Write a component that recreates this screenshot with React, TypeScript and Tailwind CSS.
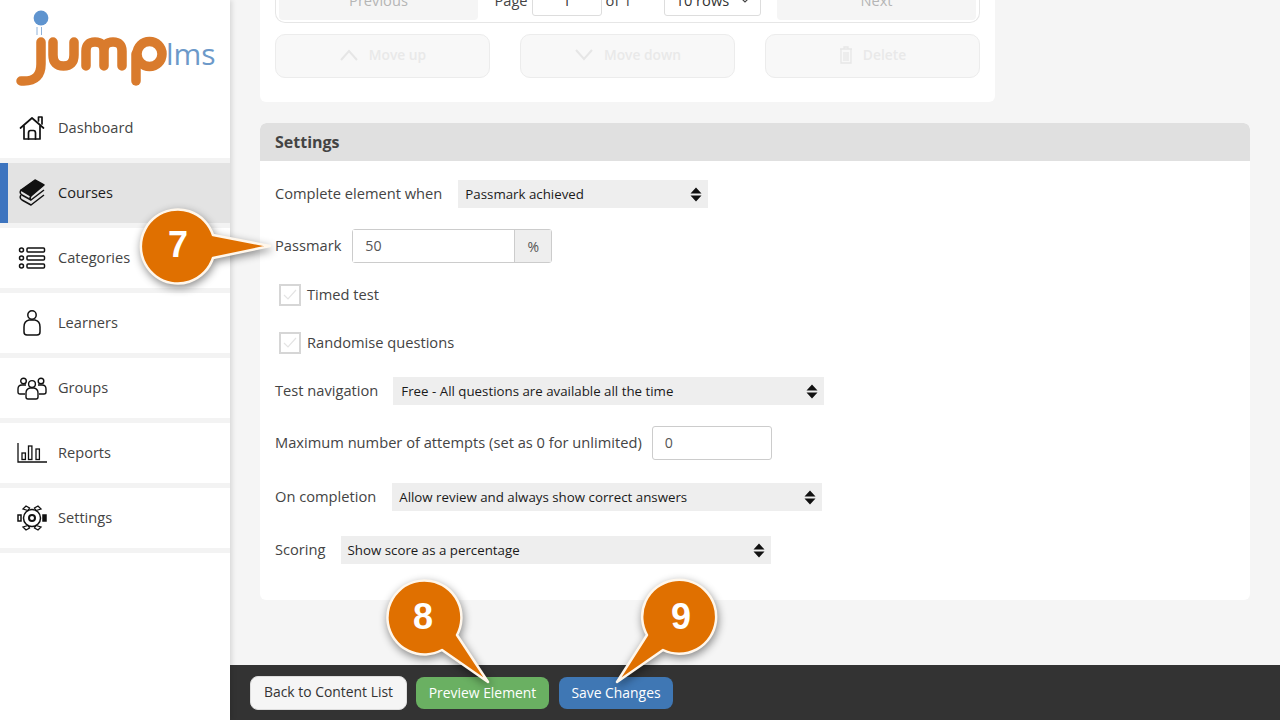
import React from "react";

const Home = () => (
  <svg width="26" height="24" viewBox="0 0 26 24" fill="none" stroke="#111" strokeWidth="1.7" strokeLinejoin="round" strokeLinecap="round">
    <path d="M1.5 12 13 2l11.5 10" />
    <path d="M5 10v13h16V10" />
    <path d="M9.5 23v-6q0-2.5 2-2.5h3q2 0 2 2.5v6" />
    <path d="M19.5 5V1h3.5v7" fill="#fff" />
  </svg>
);
const Books = () => (
  <svg width="28" height="28" viewBox="0 0 28 28" fill="none" stroke="#111" strokeWidth="1.5" strokeLinejoin="round">
    <path d="M3 11 17 1l9 5-13 11z" fill="#111" />
    <path d="M3 11q-2 3 1 5l9 5 13-10" />
    <path d="M3 16q-2 3 1 5l9 5 13-10" />
    <path d="M13 17q-2 2 0 4" />
  </svg>
);
const ListIcon = () => (
  <svg width="28" height="22" viewBox="0 0 28 22" fill="none" stroke="#111" strokeWidth="1.5">
    <circle cx="3.5" cy="3" r="2" />
    <circle cx="3.5" cy="11" r="2" />
    <circle cx="3.5" cy="19" r="2" />
    <rect x="9" y="1" width="17.5" height="4" rx="1" />
    <rect x="9" y="9" width="17.5" height="4" rx="1" />
    <rect x="9" y="17" width="17.5" height="4" rx="1" />
  </svg>
);
const Person = () => (
  <svg width="18" height="26" viewBox="0 0 18 26" fill="none" stroke="#111" strokeWidth="1.5">
    <circle cx="9" cy="5" r="4.2" />
    <path d="M4 25q-3 0-3-3v-5q0-6 5-7h6q5 1 5 7v5q0 3-3 3z" />
  </svg>
);
const Group = () => (
  <svg width="30" height="23" viewBox="0 0 30 23" fill="none" stroke="#111" strokeWidth="1.4" strokeLinejoin="round">
    <circle cx="6.5" cy="4" r="2.8" />
    <circle cx="24" cy="4" r="2.8" />
    <circle cx="15" cy="7" r="3.4" />
    <path d="M8 17H3q-2 0-2-2v-3q0-4 4-4h4" />
    <path d="M22 17h5q2 0 2-2v-3q0-4-4-4h-4" />
    <path d="M11 22q-2 0-2-2v-4q0-4 4-5h4q4 1 4 5v4q0 2-2 2z" />
  </svg>
);
const Chart = () => (
  <svg width="30" height="20" viewBox="0 0 30 20" fill="none" stroke="#111" strokeWidth="1.3">
    <path d="M1 0v19h29" />
    <rect x="5" y="10" width="3.4" height="6.5" />
    <rect x="11.5" y="3" width="3.4" height="13.5" />
    <rect x="19" y="6" width="3.4" height="10.5" />
  </svg>
);
const Gear = () => (
  <svg width="30" height="28" viewBox="0 0 30 28" fill="none" stroke="#111" strokeWidth="1.5">
    <circle cx="15" cy="14" r="8.5" />
    <circle cx="15" cy="14" r="3" strokeWidth="2" />
    <rect x="1" y="11" width="3" height="6" />
    <rect x="26" y="11" width="3" height="6" fill="#111" />
    <path d="m6 5 3-3 3.5 2-1.5 2.5zM24 5l-3-3-3.5 2 1.5 2.5zM6 23l3 3 3.5-2-1.5-2.5zM24 23l-3 3-3.5-2 1.5-2.5z" strokeWidth="1.3" />
  </svg>
);

const nav: { label: string; icon: React.ReactNode; active?: boolean }[] = [
  { label: "Dashboard", icon: <Home /> },
  { label: "Courses", icon: <Books />, active: true },
  { label: "Categories", icon: <ListIcon /> },
  { label: "Learners", icon: <Person /> },
  { label: "Groups", icon: <Group /> },
  { label: "Reports", icon: <Chart /> },
  { label: "Settings", icon: <Gear /> },
];

const Logo = () => (
  <div className="relative h-[98px] w-full shrink-0">
    <svg className="absolute left-0 top-0" width="170" height="90" viewBox="0 0 170 90" fill="none">
      <circle cx="41" cy="18" r="7.4" fill="#5f94cf" />
      <path d="M37 27v8M41.5 27v8" stroke="#8fb2da" strokeWidth="1" />
      <g stroke="#d97b2d" strokeWidth="9.5" strokeLinecap="round" strokeLinejoin="round">
        <path d="M41 42v22q0 17-17 17h-3" />
        <path d="M53 42v13q0 11 10.5 11T74 55V42" />
        <path d="M86 66V51q0-9 9-9t9 9v15M104 51q0-9 9-9t9 9v15" />
        <path d="M136 81V54" />
        <circle cx="149.5" cy="54" r="12.5" />
      </g>
    </svg>
    <span className="absolute left-[166px] top-[34px] text-[30px] leading-[40px] text-[#6c99c9]">lms</span>
  </div>
);

const Sidebar = () => (
  <aside className="relative z-10 flex h-full w-[230px] shrink-0 flex-col bg-white shadow-[2px_0_5px_rgba(0,0,0,0.12)]">
    <Logo />
    <div className="flex flex-col gap-[5px] bg-[#f3f3f3]">
      {nav.map((n) => (
        <div key={n.label} className={`flex h-[60px] items-center ${n.active ? "border-l-8 border-[#3d74bf] bg-[#e3e3e3] text-[#1c1c1c]" : "bg-white text-[#444]"}`}>
          <div className={`flex justify-center ${n.active ? "ml-[10px] w-[28px]" : "ml-[17px] w-[30px]"}`}>{n.icon}</div>
          <span className={`text-[14.6px] ${n.active ? "ml-[12px]" : "ml-[11px]"}`}>{n.label}</span>
        </div>
      ))}
    </div>
    <div className="flex-1 border-t-[5px] border-[#f3f3f3]" />
  </aside>
);

const Updown = () => (
  <svg width="12" height="15" viewBox="0 0 12 15" fill="#111">
    <path d="M6 0.5 11.5 6.5H.5zM6 14.5.5 8.5h11z" />
  </svg>
);

const Select = ({ text, width, pad }: { text: string; width: string; pad: string }) => (
  <div className={`flex h-[28px] items-center justify-between bg-[#eeeeee] pr-[6px] text-[13.3px] text-[#1a1a1a] ${width} ${pad}`}>
    <span className="pt-[1px]">{text}</span>
    <Updown />
  </div>
);

const Check = ({ label }: { label: string }) => (
  <div className="ml-[4px] flex h-[22px] items-center">
    <div className="flex h-[22px] w-[22px] items-center justify-center border-2 border-[#d6d6d6] bg-white">
      <svg width="14" height="12" viewBox="0 0 14 12" fill="none" stroke="#e4e4e4" strokeWidth="1.2">
        <path d="m1 6 4 4 8-9" />
      </svg>
    </div>
    <span className="ml-[6px] text-[14.66px] text-[#444]">{label}</span>
  </div>
);

const GhostButton = ({ icon, label }: { icon: React.ReactNode; label: string }) => (
  <div className="flex h-[44px] w-[215px] items-center justify-center gap-[10px] rounded-[10px] border border-[#ececec] bg-[#f8f8f8] pb-[2px] text-[13.8px] font-semibold text-[#e9e9e9]">
    {icon}
    <span>{label}</span>
  </div>
);

const TopCard = () => (
  <section className="-mt-[27px] w-[735px] rounded-b-[6px] bg-white px-[15px] pb-[24px]">
    <div className="flex h-[50px] items-end justify-between rounded-b-[10px] border border-t-0 border-[#e6e6e6] px-[3px] pb-[2px] text-[14.66px] text-[#444]">
      <div className="flex h-[38px] w-[199px] items-center justify-center rounded-b-[4px] bg-[#f5f5f5] text-[#b5b5b5]">Previous</div>
      <div className="mb-[4px] flex h-[30px] items-center">
        <span>Page</span>
        <div className="mx-[4px] flex h-[30px] w-[70px] items-center justify-center rounded-[3px] border border-[#ddd] bg-white text-[#333]">1</div>
        <span>of 1</span>
        <div className="ml-[32px] flex h-[30px] w-[97px] items-center justify-between rounded-[3px] border border-[#ddd] bg-white px-[11px] text-[#333]">
          <span>10 rows</span>
          <svg width="8" height="6" viewBox="0 0 8 6" fill="none" stroke="#444" strokeWidth="1.2"><path d="m1 1 3 3 3-3" /></svg>
        </div>
      </div>
      <div className="flex h-[38px] w-[199px] items-center justify-center rounded-b-[4px] bg-[#f5f5f5] text-[#b5b5b5]">Next</div>
    </div>
    <div className="mt-[11px] flex justify-between">
      <GhostButton
        label="Move up"
        icon={<svg width="20" height="12" viewBox="0 0 20 12" fill="none" stroke="#e6e6e6" strokeWidth="2"><path d="m2 11 8-9 8 9" /></svg>}
      />
      <GhostButton
        label="Move down"
        icon={<svg width="20" height="12" viewBox="0 0 20 12" fill="none" stroke="#e6e6e6" strokeWidth="2"><path d="m2 1 8 9 8-9" /></svg>}
      />
      <GhostButton
        label="Delete"
        icon={
          <svg width="14" height="18" viewBox="0 0 14 18" fill="none" stroke="#e6e6e6" strokeWidth="1.3">
            <path d="M1 3h12M5 3V1h4v2M2 3v14h10V3M5 6v9M7 6v9M9 6v9" />
          </svg>
        }
      />
    </div>
  </section>
);

const Row = ({ label, className, children }: { label: string; className: string; children: React.ReactNode }) => (
  <div className={`flex items-center text-[14.66px] text-[#444] ${className}`}>
    <span>{label}</span>
    {children}
  </div>
);

const SettingsCard = () => (
  <section className="mt-[21px] w-[990px] overflow-hidden rounded-[6px] bg-white">
    <div className="flex h-[38px] items-center rounded-t-[6px] bg-[#e0e0e0] px-[15px] text-[16px] font-bold text-[#444]">Settings</div>
    <div className="flex h-[439px] flex-col px-[15px] pt-[19px]">
      <Row label="Complete element when" className="h-[28px] gap-[16px]">
        <Select text="Passmark achieved" width="w-[250px]" pad="pl-[7px]" />
      </Row>
      <Row label="Passmark" className="mt-[21px] h-[34px] gap-[11px]">
        <div className="flex h-[34px] w-[200px] rounded-[3px] border border-[#ccc]">
          <div className="flex flex-1 items-center bg-white px-[12px] text-[14.2px] text-[#555]">50</div>
          <div className="flex w-[37px] items-center justify-center border-l border-[#ccc] bg-[#eeeeee] text-[14px] text-[#555]">%</div>
        </div>
      </Row>
      <div className="mt-[21px]"><Check label="Timed test" /></div>
      <div className="mt-[26px]"><Check label="Randomise questions" /></div>
      <Row label="Test navigation" className="mt-[23px] h-[28px] gap-[15px]">
        <Select text="Free - All questions are available all the time" width="w-[431px]" pad="pl-[8px]" />
      </Row>
      <Row label="Maximum number of attempts (set as 0 for unlimited)" className="mt-[21px] h-[34px] gap-[10px]">
        <div className="flex h-[34px] w-[120px] items-center rounded-[3px] border border-[#ccc] bg-white px-[12px] text-[14.2px] text-[#555]">0</div>
      </Row>
      <Row label="On completion" className="mt-[23px] h-[28px] gap-[16px]">
        <Select text="Allow review and always show correct answers" width="w-[430px]" pad="pl-[7px]" />
      </Row>
      <Row label="Scoring" className="mt-[25px] h-[28px] gap-[15px]">
        <Select text="Show score as a percentage" width="w-[430px]" pad="pl-[7px]" />
      </Row>
    </div>
  </section>
);

const BottomBar = () => (
  <footer className="relative flex h-[55px] shrink-0 items-center gap-[10px] bg-[#333333] pl-[20px] text-[13.9px]">
    <div className="flex h-[34px] w-[157px] items-center justify-center rounded-[8px] border border-[#ddd] bg-[#f5f5f5] text-[#333]">Back to Content List</div>
    <div className="ml-[-1px] flex h-[32px] w-[133px] items-center justify-center rounded-[8px] bg-[#6ab062] pt-[1px] text-white">Preview Element</div>
    <div className="flex h-[32px] w-[114px] items-center justify-center rounded-[8px] bg-[#3f77b4] pt-[1px] text-white">Save Changes</div>
  </footer>
);

const Callout = ({ d, num, className }: { d: string; num: string; className: string }) => (
  <div className={`absolute z-20 h-[110px] w-[140px] ${className}`}>
    <svg className="absolute left-0 top-0 overflow-visible drop-shadow-[1px_3px_4px_rgba(0,0,0,0.45)]" width="140" height="110" viewBox="0 0 140 110">
      <path d={d} fill="#e07000" stroke="#fff7ec" strokeWidth="2.5" strokeLinejoin="round" />
    </svg>
    <span className="absolute left-[8px] top-[8px] flex h-[74px] w-[74px] items-center justify-center font-['Liberation_Sans',sans-serif] text-[36px] font-bold text-white">{num}</span>
  </div>
);

export default function App() {
  return (
    <div className="relative flex h-[720px] w-[1280px] overflow-hidden bg-[#f5f5f5] font-['Open_Sans',sans-serif]">
      <Sidebar />
      <main className="flex min-w-0 flex-1 flex-col">
        <div className="flex flex-1 flex-col overflow-hidden pl-[30px]">
          <TopCard />
          <SettingsCard />
        </div>
        <BottomBar />
      </main>
      {/* bubble origin: circle centre sits at 45,45 in each box */}
      <Callout className="left-[133px] top-[200px]" num="7" d="M80 35 137 46 80 58A37 37 0 1 1 80 35Z" />
      <Callout className="left-[378px] top-[572px]" num="8" d="M79 63 110 110 64 78A37 37 0 1 1 79 63Z" />
      <Callout className="left-[636px] top-[572px]" num="9" d="M11 63-19 110 27 78A37 37 0 1 0 11 63Z" />
    </div>
  );
}
